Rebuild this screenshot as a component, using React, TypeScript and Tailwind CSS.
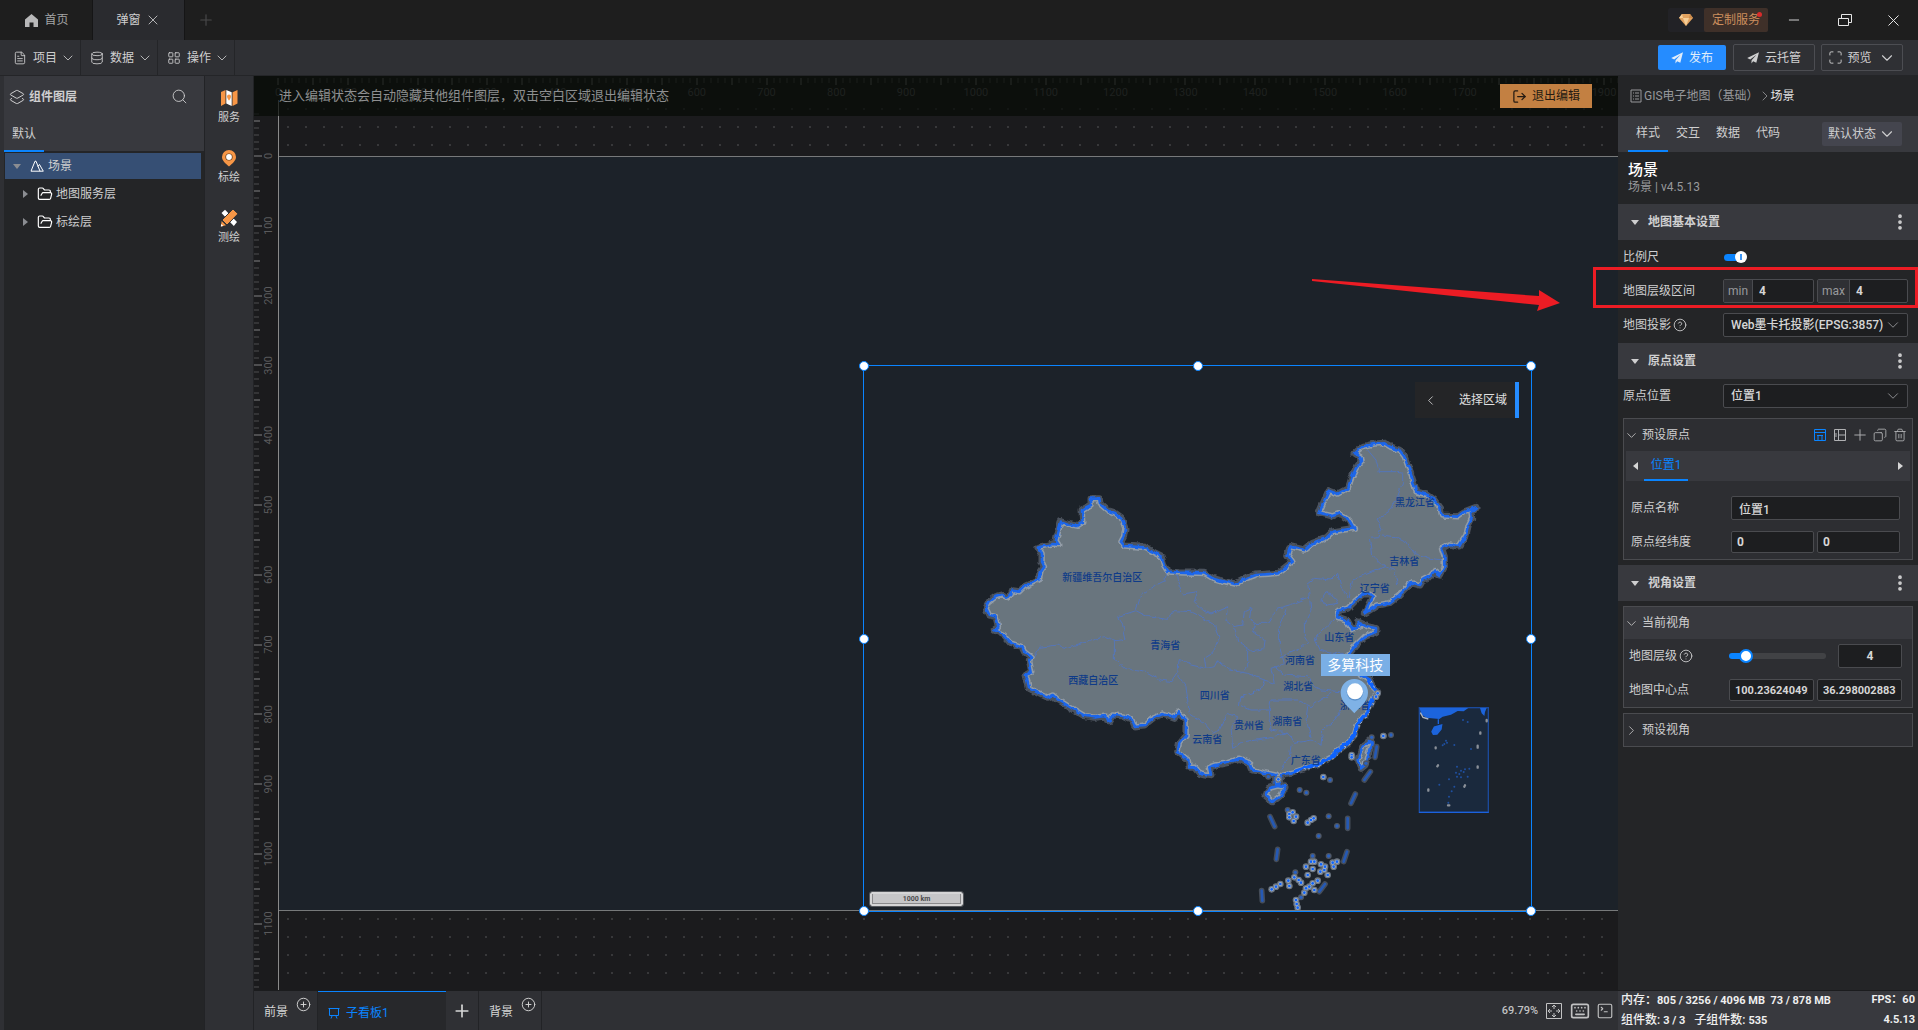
import { useState, type ReactNode } from "react";
import {
  ChevronDown,
  ChevronLeft,
  ChevronRight,
  CircleHelp,
  CirclePlus,
  Copy,
  Database,
  EllipsisVertical,
  FileText,
  FolderOpen,
  Keyboard,
  LayoutGrid,
  Layers2,
  LogOut,
  Maximize,
  Minus,
  Plus,
  Search,
  SquareTerminal,
  Trash2,
  X,
} from "lucide-react";

const SCALE = 0.6979;

/* ---------- map data ---------- */

const mainland =
  "M75 565L85 545 105 530 122 525 135 533 150 525 155 512 175 515 190 500 215 488 235 478 240 455 250 440 243 425 243 400 237 390 228 383 250 378 275 372 293 374 285 362 300 305 320 313 348 318 365 308 363 270 375 262 390 255 390 236 415 236 417 252 440 272 460 278 480 292 492 325 488 350 480 365 490 378 550 382 580 398 600 408 608 435 620 455 650 458 730 460 755 475 790 485 823 492 850 478 885 465 950 460 995 425 980 405 988 380 1030 390 1055 370 1095 355 1115 335 1180 325 1165 300 1135 280 1115 288 1075 278 1103 212 1130 222 1162 205 1170 180 1185 145 1200 125 1198 110 1182 100 1205 80 1240 72 1270 70 1290 82 1315 90 1330 110 1345 150 1355 180 1365 215 1400 225 1420 240 1438 265 1442 288 1490 290 1510 275 1545 262 1530 275 1532 295 1522 315 1515 345 1495 378 1465 372 1442 385 1450 410 1450 440 1438 465 1420 452 1408 468 1385 480 1377 495 1350 488 1335 505 1315 525 1285 548 1250 555 1210 580 1235 530 1225 522 1205 522 1185 540 1160 565 1130 572 1132 592 1155 600 1170 628 1195 622 1190 605 1220 620 1245 625 1245 635 1210 650 1185 675 1165 700 1175 730 1200 765 1225 780 1235 800 1250 815 1235 840 1220 875 1190 910 1180 945 1160 970 1135 988 1110 1012 1080 1028 1040 1042 1000 1055 965 1063 955 1080 958 1095 945 1092 943 1065 910 1058 870 1048 865 1028 835 1015 800 1028 765 1035 745 1042 750 1067 735 1065 715 1060 700 1042 685 1042 682 1020 650 995 655 970 675 945 675 900 650 877 640 895 605 882 575 895 550 915 520 918 512 898 490 888 455 885 443 905 435 888 400 892 370 887 345 872 320 857 290 838 275 825 260 832 235 820 205 805 195 765 212 755 205 720 210 710 190 695 183 680 150 668 130 645 100 630 112 620 105 590 85 585Z" +
  "M1190 1020L1205 980 1228 960 1232 970 1220 1005 1212 1035 1200 1045Z" +
  "M912 1125L925 1105 950 1098 972 1102 960 1125 935 1145Z";

const borders =
  "M215 712L235 682 290 675 320 685 380 665 430 650 465 662 495 658 485 612 470 590 525 572 540 525 575 500 612 482 615 458" +
  "M645 462L655 500 665 522 710 515 700 545 725 570 750 582 800 560 795 600 820 620" +
  "M525 572L560 590 620 598 640 572 690 575 720 590 760 615 775 655 755 700 730 715 735 745 760 740 770 720" +
  "M460 662L460 720 490 745 560 758 600 780 630 785 650 755 655 718 690 735 735 745" +
  "M650 765L675 800 685 880 700 890 730 910 755 940 775 930 800 880 830 890 810 920 815 985 850 965 920 955 980 940 1000 970 1050 960 1080 975" +
  "M820 620L845 615 850 575 870 565 865 600 885 610 875 635 910 660 905 690 875 695 830 665 820 620M860 690L860 740 840 760" +
  "M770 720L805 750 860 760 910 780 900 810 840 830 835 855 870 870 925 870 930 840 1010 840 1050 860 1110 820" +
  "M885 610L920 610 950 565 985 555 1045 530M975 565L955 620 955 680 970 730 930 745 940 790 910 780" +
  "M925 870L930 930 980 940M1220 90L1245 120 1255 155 1305 155 1325 160 1325 185 1310 230 1290 270 1245 300 1260 325 1250 350 1228 352 1235 405 1270 440 1300 450 1310 495" +
  "M1260 345L1300 350 1340 370 1360 400 1410 415 1445 420M1270 440L1200 470 1175 480 1165 530" +
  "M1045 530L1040 490 1060 475 1110 480 1130 460 1140 500 1160 530M1080 540L1095 515 1120 530 1130 550 1100 555Z" +
  "M1045 530L1050 570 1030 610 1030 650 1040 665 1010 690 960 710M1125 595L1075 640 1060 660 1075 690 1110 700 1150 700" +
  "M940 740L970 765 1040 770 1060 800 1080 810 1140 815M1040 860L1035 900 1050 950M1150 860L1120 900 1085 930 1080 975M990 975L985 1010 960 1045";

const coast =
  "M1225 780L1235 800 1250 815 1235 840 1220 875 1190 910 1180 945 1160 970 1135 988 1110 1012 1080 1028 1040 1042 1000 1055";

const seaLines =
  "M1247 980L1242 1012M1228 1055L1210 1080M1183 1122L1170 1150M1160 1195V1225M1158 1295L1148 1325M1092 1392L1075 1415M902 1412L904 1442M950 1288L946 1318M927 1190L941 1220";

const loneIslets = [
  [1087, 1072], [1107, 1080], [1016, 1110], [1036, 1118], [1103, 1189], [1128, 1218], [1073, 1248],
  [1268, 947], [1290, 945], [1232, 952], [1215, 1030], [922, 1070], [980, 1170], [1055, 1308],
  [1103, 1308], [1003, 1357], [1020, 1432],
];

const reefs = [
  [985, 1182], [995, 1177], [1005, 1190], [985, 1192], [998, 1203], [1040, 1208], [1050, 1200], [1058, 1195],
  [1050, 1325], [1060, 1325], [1035, 1340], [1055, 1347], [1080, 1333], [1115, 1328], [1128, 1325], [1118, 1340],
  [1090, 1350], [1100, 1365], [1078, 1355], [1092, 1340], [1040, 1365], [1000, 1372], [982, 1382], [985, 1398],
  [958, 1392], [945, 1400], [932, 1408], [1020, 1388], [1013, 1380], [1055, 1390], [1070, 1382], [1045, 1400],
  [1035, 1405], [1060, 1410], [1030, 1418], [1005, 1440], [1007, 1452], [1010, 1463], [1172, 1005], [1172, 1012],
  [1087, 1071], [1267, 948], [952, 1078], [1245, 830], [1250, 820],
];

const provinces: [string, number, number][] = [
  ["新疆维吾尔自治区", 424, 482],
  ["西藏自治区", 397, 792],
  ["青海省", 613, 687],
  ["四川省", 761, 836],
  ["贵州省", 864, 926],
  ["云南省", 739, 970],
  ["湖南省", 979, 914],
  ["湖北省", 1012, 811],
  ["河南省", 1017, 733],
  ["山东省", 1135, 662],
  ["辽宁省", 1241, 515],
  ["吉林省", 1330, 434],
  ["黑龙江省", 1362, 258],
  ["广东省", 1034, 1032],
  ["浙江省", 1182, 866],
];

function ChinaMap() {
  return (
    <svg viewBox="0 0 1740 1473" className="absolute left-[97px] top-[54px] h-[491px] w-[580px]">
      <defs>
        <filter id="rough" x="-5%" y="-5%" width="110%" height="110%">
          <feTurbulence type="fractalNoise" baseFrequency="0.05" numOctaves="2" seed="4" result="n" />
          <feDisplacementMap in="SourceGraphic" in2="n" scale="14" xChannelSelector="R" yChannelSelector="G" />
        </filter>
        <clipPath id="land">
          <path d={mainland} />
        </clipPath>
      </defs>
      <g filter="url(#rough)" strokeLinejoin="round" strokeLinecap="round">
        <path d={mainland} fill="#69757e" stroke="#4c535e" strokeWidth="21" />
        <path d={mainland} fill="#69757e" />
        <path d={borders} fill="none" stroke="#5576ba" strokeWidth="3" />
        <path d={mainland} fill="none" stroke="#929ca7" strokeWidth="17" clipPath="url(#land)" />
        <path d={mainland} fill="none" stroke="#1b66ea" strokeWidth="8" />
        <path d={coast} fill="none" stroke="#0d63ff" strokeWidth="11" />
        <path d={coast} fill="none" stroke="#a9b8d2" strokeWidth="3" strokeDasharray="4 12" transform="translate(6 4)" />
      </g>
      <g strokeLinecap="round" fill="none">
        <path d={seaLines} stroke="#454d59" strokeWidth="17" />
        <path d={seaLines} stroke="#2559b4" strokeWidth="8" />
      </g>
      {loneIslets.map(([x, y]) => (
        <g key={`${x}-${y}`}>
          <circle cx={x} cy={y} r="9" fill="#4f5763" />
          <circle cx={x} cy={y} r="5" fill="#2961c2" />
        </g>
      ))}
      {reefs.map(([x, y]) => (
        <circle key={`h${x}-${y}`} cx={x} cy={y} r="10" fill="#6d7783" />
      ))}
      {reefs.map(([x, y]) => (
        <g key={`r${x}-${y}`}>
          <circle cx={x} cy={y} r="6" fill="#a7b6cc" />
          <circle cx={x} cy={y} r="4" fill="#0e63fb" />
        </g>
      ))}

      <g fill="#0f3b88" fontSize="30" textAnchor="middle" fontWeight="500">
        {provinces.map(([name, x, y]) => (
          <text key={name} x={x} y={y}>
            {name}
          </text>
        ))}
      </g>

      {/* marker */}
      <rect x="1080" y="702" width="207" height="66" fill="#7aafe6" />
      <text x="1183" y="750" fill="#fff" fontSize="42" textAnchor="middle">
        多算科技
      </text>
      <path d="M1180 880C1166 862 1139 848 1139 818A41 41 0 0 1 1221 818C1221 848 1194 862 1180 880Z" fill="#7fb2e6" />
      <circle cx="1182" cy="817" r="25" fill="#5e93cc" />
      <circle cx="1182" cy="814" r="24" fill="#fff" />

      {/* south sea inset */}
      <rect x="1375" y="863" width="207" height="314" fill="#1a293d" stroke="#1b4a9c" strokeWidth="4" />
      <path d="M1374 1177H1583" stroke="#1b62de" strokeWidth="4" />
      <path d="M1376 864H1522L1508 874 1490 873 1470 884 1445 890 1435 897 1395 893 1380 882Z" fill="#1c64dc" />
      <path d="M1378 878L1386 892 1402 897" stroke="#aeb4bf" strokeWidth="4" fill="none" />
      <path d="M1557 864H1577L1572 876 1570 888 1562 880Z" fill="#1c64dc" />
      <path d="M1432 898V912M1413 935L1420 921 1442 915 1440 928 1428 942 1417 943Z" stroke="#1c64dc" strokeWidth="4" fill="#1c64dc" />
      <g stroke="#8a9099" strokeWidth="7" strokeLinecap="round">
        <path d="M1558 937V941M1550 977V983M1424 982V985M1431 1036L1429 1039M1550 1039V1043M1512 1096L1510 1100M1402 1108V1112M1461 1156H1465M1577 900V904" />
      </g>
      <g fill="#1f4f9f">
        {[[1506, 900], [1520, 906], [1455, 962], [1450, 972], [1458, 968], [1445, 976], [1480, 975], [1530, 987], [1488, 1040], [1500, 1052], [1512, 1048], [1485, 1058], [1495, 1062], [1508, 1056], [1525, 1046], [1488, 1070], [1464, 1078], [1500, 1072], [1520, 1070], [1435, 1094], [1480, 1100], [1472, 1114], [1464, 1130], [1462, 1148]].map(
          ([x, y]) => (
            <circle key={`i${x}-${y}`} cx={x} cy={y} r="3" />
          ),
        )}
      </g>
    </svg>
  );
}

/* ---------- rulers ---------- */

function TopRuler() {
  const ticks = Array.from({ length: 193 }, (_, i) => i);
  return (
    <svg className="absolute left-6 top-0 h-10 w-full overflow-visible" stroke="#4a4a4c" fill="#58585a" fontSize="11">
      {ticks.map((i) => {
        const x = Math.round(i * 10 * SCALE);
        return (
          <line key={i} x1={x} x2={x} y1={2} y2={i % 5 === 0 ? 9 : 7} strokeWidth={i % 5 === 0 ? 2 : 1} />
        );
      })}
      {ticks
        .filter((i) => i % 10 === 0)
        .map((i) => (
          <text key={i} x={i * 10 * SCALE} y={20} stroke="none" textAnchor="middle">
            {i * 10}
          </text>
        ))}
    </svg>
  );
}

function SideRuler() {
  const ticks = Array.from({ length: 126 }, (_, i) => i - 6);
  return (
    <svg className="absolute left-0 top-0 h-full w-6" stroke="#4e4e50" fill="#5a5a5c" fontSize="11">
      {ticks.map((i) => {
        const y = 80 + Math.round(i * 10 * SCALE);
        const len = i % 10 === 0 ? 8 : i % 5 === 0 ? 6 : 5;
        return <line key={i} x1={0} x2={len} y1={y} y2={y} strokeWidth={i % 5 === 0 ? 2 : 1} />;
      })}
      {ticks
        .filter((i) => i >= 0 && i % 10 === 0)
        .map((i) => (
          <text
            key={i}
            stroke="none"
            textAnchor="middle"
            transform={`translate(18 ${80 + i * 10 * SCALE}) rotate(-90)`}
          >
            {i * 10}
          </text>
        ))}
    </svg>
  );
}

/* ---------- small icons ---------- */

function PlaneIcon() {
  return (
    <svg viewBox="0 0 12 12" className="size-3" fill="currentColor">
      <path d="M12 .3L.2 6l3 1.5L9.5 2.8 4.6 8.2 4.4 11.6 6.2 9.2 9.3 10.7Z" />
    </svg>
  );
}

function Caret({ open }: { open?: boolean }) {
  return (
    <svg viewBox="0 0 8 8" className="size-2 shrink-0" fill="currentColor">
      <path d={open ? "M0 2H8L4 7Z" : "M2 0V8L7 4Z"} />
    </svg>
  );
}

const tools = [
  {
    label: "服务",
    icon: (
      <svg viewBox="0 0 18 18" className="size-[18px]">
        <path d="M1 3L5.5 1V14.5L1 17ZM12.500 3.200L17.500 1V14.500L12.500 17Z" fill="#f79646" />
        <path d="M6.300 1L11.700 3.200V17L6.300 14.500Z" fill="#fff" />
        <path d="M9 5.500a2 2 0 0 1 2 2c0 1.600-2 4.200-2 4.200S7 9 7 7.500a2 2 0 0 1 2-2Z" fill="#f79646" />
      </svg>
    ),
  },
  {
    label: "标绘",
    icon: (
      <svg viewBox="0 0 18 18" className="size-[18px]">
        <path d="M9 1a7 7 0 0 1 7 7c0 3.500-3 6-7 9.500C5 14 2 11.500 2 8a7 7 0 0 1 7-7Z" fill="#f79646" />
        <circle cx="9" cy="8" r="3.600" fill="#5d3a1c" />
        <circle cx="9" cy="8" r="2.900" fill="#fff" />
      </svg>
    ),
  },
  {
    label: "测绘",
    icon: (
      <svg viewBox="0 0 18 18" className="size-[18px]">
        <path d="M1.500 4L5 .8 17 13l-3.200 4Z" fill="#fff" />
        <path d="M13 0L18 4.800 7 16 2 11Z" fill="#f79646" stroke="#2f3034" />
        <path d="M1.600 12L6 16.200 1 17.500Z" fill="#f79646" />
        <path d="M1.200 15L3.300 17 .8 17.600Z" fill="#fff" />
      </svg>
    ),
  },
];

const inputClass =
  "w-0 min-w-0 flex-1 rounded-xs border border-[#4a4b4f] bg-[#1d1e20] text-[#d6d6d6] outline-none";

/* ---------- right panel pieces ---------- */

function Section({ title }: { title: string }) {
  return (
    <div className="flex h-9 shrink-0 items-center bg-[#38393e] pl-[13px] pr-2 font-bold">
      <Caret open />
      <h3 className="ml-[9px] flex-1">{title}</h3>
      <button aria-label={`${title}菜单`}>
        <EllipsisVertical size={20} strokeWidth={2.500} />
      </button>
    </div>
  );
}

function SelectBox({ id, value }: { id: string; value: string }) {
  return (
    <div className="relative flex-1">
      <select
        id={id}
        className="block h-6 w-full appearance-none rounded-xs border border-[#4a4b4f] bg-[#1d1e20] px-[7px] font-medium text-[#d6d6d6] outline-none"
      >
        <option>{value}</option>
      </select>
      <ChevronDown size={18} strokeWidth={1.250} className="pointer-events-none absolute right-1.5 top-[3px] text-[#909194]" />
    </div>
  );
}

function RangeInput({ name }: { name: string }) {
  return (
    <div className="flex h-6 flex-1 rounded-xs border border-[#4a4b4f] bg-[#1d1e20]">
      <label htmlFor={`zoom-${name}`} className="flex items-center border-r border-[#4a4b4f] bg-[#2f3034] px-1 text-[#98999c]">
        {name}
      </label>
      <input id={`zoom-${name}`} defaultValue="4" className="w-0 flex-1 px-1.5 font-bold text-[#d6d6d6] outline-none" />
    </div>
  );
}

function Row({ label, htmlFor, help, children }: { label: string; htmlFor: string; help?: boolean; children: ReactNode }) {
  return (
    <div className="flex h-[34px] items-center">
      <div className="flex w-[100px] shrink-0 items-center gap-0.5">
        <label htmlFor={htmlFor}>{label}</label>
        {help && <CircleHelp size={14} strokeWidth={1.500} />}
      </div>
      {children}
    </div>
  );
}

function PropertyPanel() {
  const [tab, setTab] = useState("样式");
  const [showScale, setShowScale] = useState(true);
  const [level, setLevel] = useState(12);

  return (
    <aside className="flex w-[300px] shrink-0 flex-col bg-[#242527]">
      <nav className="flex h-10 shrink-0 items-center pl-3 text-[#96979a]">
        <svg viewBox="0 0 12 14" className="mr-0.5 h-3.5 w-3" fill="none" stroke="currentColor">
          <path d="M1 1H11V13H1ZM3 4H4M5 4H9M3 7H4M5 7H9M3 10H4M5 10H9" />
        </svg>
        <a href="#gis">GIS电子地图（基础）</a>
        <ChevronRight size={16} strokeWidth={1.250} className="-mx-0.5" />
        <span className="text-[#e2e2e2]">场景</span>
      </nav>

      <div className="flex h-9 shrink-0 bg-[#38393e] pl-2.5">
        {["样式", "交互", "数据", "代码"].map((item) => (
          <button
            key={item}
            onClick={() => setTab(item)}
            className={`w-10 border-b-2 ${tab === item ? "border-[#0a84ff]" : "border-transparent"}`}
          >
            {item}
          </button>
        ))}
        <button className="ml-auto mr-4 flex h-6 w-20 items-center justify-center gap-0.5 self-center rounded-xs bg-[#44454e]">
          默认状态
          <ChevronDown size={18} strokeWidth={1.500} />
        </button>
      </div>

      <div className="h-[52px] shrink-0 px-2.5 pt-[9px]">
        <h2 className="text-[15px] leading-[18px] font-medium text-white">场景</h2>
        <p className="leading-[16px] text-[#98999c]">场景 | v4.5.13</p>
      </div>

      <Section title="地图基本设置" />
      <div className="pl-[5px] pr-2.5 pb-px">
        <div className="flex h-[34px] items-center">
          <label htmlFor="scale" className="w-[101px]">
            比例尺
          </label>
          <label className="relative flex h-3 w-[22px] items-center">
            <input
              id="scale"
              type="checkbox"
              checked={showScale}
              onChange={(e) => setShowScale(e.target.checked)}
              className="peer absolute size-full appearance-none"
            />
            <span className="h-[7px] w-full rounded-full bg-gray-600 peer-checked:bg-[#0a84ff]" />
            <span className="absolute left-0 flex size-3 items-center justify-center rounded-full bg-white peer-checked:left-[11px]">
              <span className="h-1.5 w-0.5 bg-[#3d96f5]" />
            </span>
          </label>
        </div>
        <Row label="地图层级区间" htmlFor="zoom-min">
          <div className="flex flex-1 gap-[3px]">
            <RangeInput name="min" />
            <RangeInput name="max" />
          </div>
        </Row>
        <Row label="地图投影" htmlFor="projection" help>
          <SelectBox id="projection" value="Web墨卡托投影(EPSG:3857)" />
        </Row>
      </div>

      <Section title="原点设置" />
      <div className="pl-[5px] pr-2.5">
        <Row label="原点位置" htmlFor="origin">
          <SelectBox id="origin" value="位置1" />
        </Row>
      </div>
      <div className="mx-[5px] my-[5px] border border-[#4a4b4f] bg-[#2d2e32] px-0.5">
        <div className="flex h-8 items-center">
          <ChevronDown size={15} strokeWidth={1.250} className="-ml-0.5" />
          <span className="ml-[3px] flex-1">预设原点</span>
          <div className="flex text-[#b0b1b3]">
            <button aria-label="表格" className="flex size-5 items-center justify-center text-[#0a84ff]">
              <svg viewBox="0 0 12 12" className="size-3" fill="none" stroke="currentColor">
                <path d="M.5 .5H11.500V11.500H.5ZM.5 3.500H11.500M4 6V11M8 6V11M3 6.500H9" />
              </svg>
            </button>
            <button aria-label="布局" className="flex size-5 items-center justify-center">
              <svg viewBox="0 0 12 12" className="size-3" fill="none" stroke="currentColor">
                <path d="M.5 .5H11.500V11.500H.5ZM4.500 0V12M4.500 6H11.500M2 4V8" />
              </svg>
            </button>
            <button aria-label="添加" className="flex size-5 items-center justify-center">
              <Plus size={18} strokeWidth={1.250} />
            </button>
            <button aria-label="复制" className="flex size-5 items-center justify-center">
              <Copy size={14} strokeWidth={1.500} className="-scale-x-100" />
            </button>
            <button aria-label="删除" className="flex size-5 items-center justify-center">
              <Trash2 size={14} strokeWidth={1.500} />
            </button>
          </div>
        </div>
        <div className="flex h-[30px] items-center bg-[#38393e] px-1.5 text-[#d6d6d6]">
          <span className="rotate-180">
            <Caret />
          </span>
          <button className="ml-1 h-full w-11 border-b-2 border-[#0a84ff] text-[#0a84ff]">位置1</button>
          <span className="ml-auto">
            <Caret />
          </span>
        </div>
        <div className="pt-[10px] pl-[5px] pr-2.5">
          <Row label="原点名称" htmlFor="origin-name">
            <input id="origin-name" defaultValue="位置1" className={`${inputClass} h-6 px-[7px] font-medium`} />
          </Row>
          <Row label="原点经纬度" htmlFor="origin-lng">
            <div className="flex min-w-0 flex-1 gap-[3px]">
              <input id="origin-lng" defaultValue="0" className={`${inputClass} h-[22px] px-[5px] font-bold`} />
              <input aria-label="原点纬度" defaultValue="0" className={`${inputClass} h-[22px] px-[5px] font-bold`} />
            </div>
          </Row>
        </div>
      </div>

      <Section title="视角设置" />
      <div className="mx-[5px] mt-[5px] border border-[#4a4b4f] bg-[#2d2e32]">
        <div className="flex h-8 items-center bg-[#38393e]">
          <ChevronDown size={15} strokeWidth={1.250} />
          <span className="ml-[3px]">当前视角</span>
        </div>
        <div className="pl-[5px] pr-2.5">
          <Row label="地图层级" htmlFor="level" help>
            <input
              id="level"
              type="range"
              value={level}
              onChange={(e) => setLevel(Number(e.target.value))}
              className="h-1.5 w-[97px] appearance-none rounded-full bg-[linear-gradient(90deg,#0a84ff_16%,#414245_16%)] [&::-webkit-slider-thumb]:size-3.5 [&::-webkit-slider-thumb]:appearance-none [&::-webkit-slider-thumb]:rounded-full [&::-webkit-slider-thumb]:border-2 [&::-webkit-slider-thumb]:border-[#0a84ff] [&::-webkit-slider-thumb]:bg-white"
            />
            <input aria-label="层级" defaultValue="4" className={`${inputClass} ml-3 h-6 text-center font-bold`} />
          </Row>
          <Row label="地图中心点" htmlFor="center-lng">
            <div className="flex min-w-0 flex-1 gap-[3px]">
              <input
                id="center-lng"
                defaultValue="100.23624049251"
                className={`${inputClass} h-[22px] px-[5px] text-[11px] font-bold`}
              />
              <input
                aria-label="中心点纬度"
                defaultValue="36.29800288315"
                className={`${inputClass} h-[22px] px-[5px] text-[11px] font-bold`}
              />
            </div>
          </Row>
        </div>
      </div>
      <button className="mx-[5px] mt-[5px] flex h-[34px] shrink-0 items-center border border-[#4a4b4f] bg-[#2d2e32]">
        <ChevronRight size={15} strokeWidth={1.250} />
        <span className="ml-[3px]">预设视角</span>
      </button>

      <footer className="mt-auto flex h-10 shrink-0 flex-col justify-around border-t border-[#1b1c1e] bg-[#38393e] px-[3px] font-medium text-[#efefef]">
        <div className="flex justify-between leading-[18px]">
          <span>
            内存：
            <span className="text-[11px] font-bold whitespace-pre">805 / 3256 / 4096 MB  73 / 878 MB</span>
          </span>
          <span className="text-[11px] font-bold">FPS：60</span>
        </div>
        <div className="flex justify-between leading-[18px]">
          <span className="whitespace-pre">
            组件数: <span className="text-[11px] font-bold">3 / 3</span>   子组件数: <span className="text-[11px] font-bold">535</span>
          </span>
          <span className="text-[11px] font-bold">4.5.13</span>
        </div>
      </footer>
    </aside>
  );
}

/* ---------- canvas ---------- */

const handles = [
  "left-0 top-0",
  "left-1/2 top-0",
  "left-full top-0",
  "left-0 top-1/2",
  "left-full top-1/2",
  "left-0 top-full",
  "left-1/2 top-full",
  "left-full top-full",
];

function Canvas() {
  return (
    <div className="relative min-h-0 flex-1 overflow-hidden bg-[#1b1b1d]">
      <div className="absolute inset-0 left-6 top-6 border-l border-[#8a8a8a] bg-[radial-gradient(#38383a_1px,transparent_1px)] bg-size-[18px_18px]" />
      <div className="absolute left-[25px] right-0 top-20 h-[755px] border-y border-[#77797a] bg-[#1c2229]" />
      <TopRuler />
      <SideRuler />

      {/* selected component */}
      <div className="absolute left-[609px] top-[289px] h-[547px] w-[669px] border border-[#0a84ff]">
        <ChinaMap />
        <div className="absolute right-3 top-4 flex h-9 w-[104px] items-center justify-between border-r-4 border-[#258cff] bg-[#242527] px-2 text-[#e0e0e0]">
          <ChevronLeft size={15} strokeWidth={1.250} />
          选择区域
        </div>
        <div className="absolute bottom-[5px] left-1.5 flex h-3.5 w-[93px] items-center justify-center rounded-xs border-2 border-[#d5d5d6] bg-[#c6c6c8] outline outline-[#55585d]">
          <span className="flex h-full w-full items-center justify-center border-x border-b border-[#8a8a8c] text-[7px] font-bold text-[#4a4a4c]">
            1000 km
          </span>
        </div>
        {handles.map((pos) => (
          <span
            key={pos}
            className={`absolute size-2.5 -translate-x-1/2 -translate-y-1/2 rounded-full border-[#0a84ff] border bg-white ${pos}`}
          />
        ))}
      </div>

      <div className="absolute inset-x-0 top-0 flex h-10 items-center justify-between bg-[#050a05]/70 pl-[25px] pr-[26px]">
        <span className="text-[13px] text-[#8e8f90]">进入编辑状态会自动隐藏其他组件图层，双击空白区域退出编辑状态</span>
        <button className="flex h-6 w-[92px] items-center justify-center gap-[5px] bg-[#c38042] text-[#241a12]">
          <LogOut size={15} />
          退出编辑
        </button>
      </div>
    </div>
  );
}

function BottomBar() {
  return (
    <div className="flex h-10 shrink-0 items-stretch border-t border-[#1b1c1e] bg-[#2f3034] text-[#d6d6d6]">
      <button className="flex w-16 border-r border-[#222326] pl-2.5 pt-3">
        前景
        <CirclePlus size={15} strokeWidth={1.500} className="-mt-1.5 ml-2" />
      </button>
      <button className="flex w-32 items-center gap-1.5 border-t border-[#0a84ff] bg-[#27282b] pl-2.5 pt-1 text-[#0a84ff]">
        <svg viewBox="0 0 12 12" className="size-3" fill="none" stroke="currentColor">
          <path d="M.5 1.500H11.500M1.500 1.500V8.500H10.500V1.500M4 9L3 11.500M8 9L9 11.500" />
        </svg>
        子看板1
      </button>
      <button aria-label="新建看板" className="flex w-[33px] items-center justify-center border-r border-[#222326]">
        <Plus size={20} />
      </button>
      <button className="flex w-[63px] border-r border-[#222326] pl-2.5 pt-3">
        背景
        <CirclePlus size={15} strokeWidth={1.500} className="-mt-1.5 ml-2" />
      </button>
      <div className="ml-auto flex items-center gap-1.5 pr-1 text-[#c2c2c3]">
        <span className="text-[11px] font-medium">69.79%</span>
        <button aria-label="适应画布" className="mx-0.5">
          <svg viewBox="0 0 16 16" className="size-4" fill="none" stroke="currentColor">
            <path d="M.5 .5H15.500V15.500H.5ZM8 2V6M8 10V14M2 8H6M10 8H14M6 4L8 2 10 4M6 12L8 14 10 12M4 6L2 8 4 10M12 6L14 8 12 10" />
          </svg>
        </button>
        <button aria-label="快捷键">
          <Keyboard size={20} />
        </button>
        <button aria-label="控制台">
          <SquareTerminal size={18} strokeWidth={1.500} />
        </button>
      </div>
    </div>
  );
}

/* ---------- page ---------- */

export default function App() {
  return (
    <div className="relative flex h-screen w-full flex-col overflow-hidden bg-[#2f3034] font-['Roboto','Noto_Sans_CJK_SC',sans-serif] text-[12px] leading-[18px] text-[#cfcfd0]">
      {/* title bar */}
      <header className="flex h-10 shrink-0 items-center bg-[#1e1e1e]">
        <button className="flex h-full w-[93px] items-center justify-center gap-1.5 border-r border-[#151516] pl-0.5">
          <svg viewBox="0 0 13 13" className="size-[13px]" fill="#b8b8b9">
            <path d="M6.500 0L0 5.500V13H4.500V8.500H8.500V13H13V5.500Z" />
          </svg>
          <span className="text-[#a5a5a6]">首页</span>
        </button>
        <button className="flex h-full w-[92px] items-center justify-center gap-1 border-r border-[#151516] bg-[#2a2b2f]">
          弹窗
          <X size={16} strokeWidth={1.250} />
        </button>
        <button aria-label="新标签" className="ml-3 text-[#4a4a4b]">
          <Plus size={18} strokeWidth={1.500} />
        </button>
        <div className="ml-auto flex items-center">
          <button className="relative flex h-6 items-center rounded-xs bg-[#222226]">
            <svg viewBox="0 0 14 12" className="mx-[11px] h-3 w-3.5">
              <path d="M3 0H11L14 4 7 12 0 4Z" fill="#e2a25f" />
              <path d="M4 4H10L7 12ZM3 0L4 4H0Z" fill="#f6cf98" />
              <path d="M11 0L10 4H14Z" fill="#c98a4b" />
            </svg>
            <span className="flex h-6 items-center rounded-xs bg-[#3f3029] px-2 text-[#cc8e5d]">定制服务</span>
            <span className="absolute right-1.5 top-1 size-[5px] rounded-full bg-[#d92b2b]" />
          </button>
          <button aria-label="最小化" className="ml-[18px]">
            <Minus size={16} strokeWidth={1.500} />
          </button>
          <button aria-label="还原" className="ml-9">
            <svg viewBox="0 0 14 12" className="h-3 w-3.5" fill="none" stroke="#e6e6e6">
              <path d="M.5 4.500H10.500V11.500H.5ZM3.500 4V.5H13.500V8.500H11" />
            </svg>
          </button>
          <button aria-label="关闭" className="ml-8 mr-[15px]">
            <X size={19} strokeWidth={1.250} className="text-[#e6e6e6]" />
          </button>
        </div>
      </header>

      {/* toolbar */}
      <div className="flex h-9 shrink-0 items-center border-b border-[#242528] bg-[#2f3034] pr-[15px]">
        {[
          ["项目", FileText],
          ["数据", Database],
          ["操作", LayoutGrid],
        ].map(([label, Icon]: any) => (
          <button key={label} className="flex h-full w-[77px] items-center border-r border-[#242528] pl-[9px] first:w-[81px] first:pl-[13px]">
            <Icon size={14} strokeWidth={1.500} />
            <span className="ml-1.5">{label}</span>
            <ChevronDown size={16} strokeWidth={1.250} className="ml-[3px]" />
          </button>
        ))}
        <button className="ml-auto flex h-[25px] w-[68px] items-center justify-center gap-1.5 rounded-xs bg-[#258cff] text-[#e0ecfa]">
          <PlaneIcon />
          发布
        </button>
        <button className="ml-[7px] flex h-[27px] w-[82px] items-center justify-center gap-1.5 rounded-xs border border-[#4c4d52]">
          <PlaneIcon />
          云托管
        </button>
        <button className="ml-1.5 flex h-[27px] w-[82px] items-center justify-center gap-1 rounded-xs border border-[#4c4d52]">
          <Maximize size={15} strokeWidth={1.500} />
          预览
          <ChevronDown size={18} strokeWidth={1.500} className="ml-0.5" />
        </button>
      </div>

      <div className="flex min-h-0 flex-1">
        {/* layers */}
        <aside className="ml-1 w-[201px] shrink-0 border-r border-[#222326] bg-[#242527]">
          <div className="h-[76px] border-b border-[#242528] bg-[#38393e]">
            <div className="flex h-[41px] items-center pl-[5px] pr-4">
              <Layers2 size={16} strokeWidth={1.500} />
              <h2 className="ml-1 flex-1 font-bold">组件图层</h2>
              <button aria-label="搜索">
                <Search size={17} strokeWidth={1.250} />
              </button>
            </div>
            <button className="block h-[35px] w-10 border-b-2 border-[#0a84ff]">默认</button>
          </div>
          <ul>
            <li className="flex h-7 items-center">
              <div className="mx-px flex h-[26px] w-[196px] items-center bg-[#364f74] pl-2">
                <span className="text-[#8b8d92]">
                  <Caret open />
                </span>
                <svg viewBox="0 0 14 12" className="ml-[9px] mr-1 h-3 w-3.5" fill="none" stroke="#fff">
                  <path d="M1 11.200L5 1.200H6L10 11.200ZM7.800 6.500L9.500 4.500 13.300 11.200H10" />
                </svg>
                场景
              </div>
            </li>
            {["地图服务层", "标绘层"].map((name) => (
              <li key={name} className="flex h-7 items-center pl-[17px]">
                <span className="text-[#8b8d92]">
                  <Caret />
                </span>
                <FolderOpen size={16} strokeWidth={1.750} className="ml-2 mr-[3px] text-white" />
                {name}
              </li>
            ))}
          </ul>
        </aside>

        {/* map tools */}
        <div className="flex w-[49px] shrink-0 flex-col items-center gap-[23px] border-r border-[#222326] bg-[#2f3034] pt-[13px]">
          {tools.map((tool) => (
            <button key={tool.label} className="flex flex-col items-center gap-[3px] text-[11px] leading-4">
              {tool.icon}
              {tool.label}
            </button>
          ))}
        </div>

        <main className="flex min-w-0 flex-1 flex-col">
          <Canvas />
          <BottomBar />
        </main>

        <PropertyPanel />
      </div>

      {/* annotation */}
      <div className="pointer-events-none absolute right-0 top-[267px] h-[41px] w-[325px] border-3 border-[#ec1c24]" />
      <svg viewBox="0 0 250 34" className="pointer-events-none absolute right-[357px] top-[278px] h-[34px] w-[250px]" fill="#ec1c24">
        <path d="M1 1L228 18 228 12 249 25 226 33 228 27 1 3Z" />
      </svg>
    </div>
  );
}
